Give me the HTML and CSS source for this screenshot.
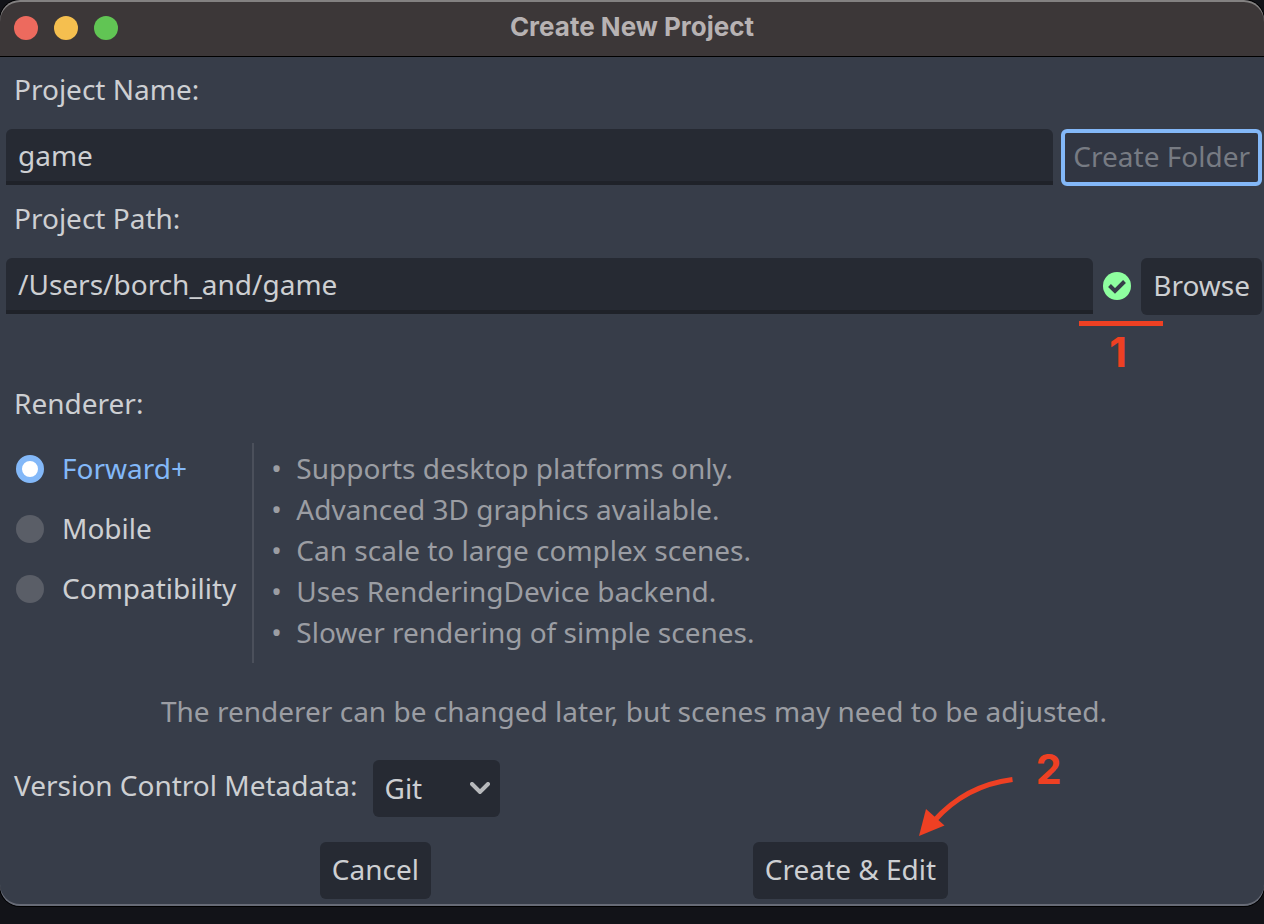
FILE: index.html
```
<!DOCTYPE html>
<html lang="en">
<head>
<meta charset="utf-8">
<title>Create New Project</title>
<link rel="stylesheet" href="styles.css">
</head>
<body>
<main class="window">
  <header class="titlebar">
    <div class="lights">
      <button type="button" class="light light-close" aria-label="Close"></button>
      <button type="button" class="light light-minimize" aria-label="Minimize"></button>
      <button type="button" class="light light-zoom" aria-label="Zoom"></button>
    </div>
    <h1 class="title">Create New Project</h1>
  </header>
  <form class="dialog">
    <label class="field-label" for="name">Project Name:</label>
    <div class="field-row">
      <input class="text-input" id="name" type="text" value="game">
      <button type="button" class="button button-disabled" disabled>Create Folder</button>
    </div>

    <label class="field-label" for="path">Project Path:</label>
    <div class="field-row">
      <input class="text-input" id="path" type="text" value="/Users/borch_and/game">
      <div class="status">
        <svg class="status-icon" viewBox="0 0 28 28" aria-hidden="true">
          <circle cx="14" cy="14" r="14" fill="#8eff9f"/>
          <path d="M6.500 13.500 L12 19 L21.500 9.500" fill="none" stroke="#363c48" stroke-width="4"/>
        </svg>
        <div class="mark mark-one">1</div>
      </div>
      <button type="button" class="button">Browse</button>
    </div>
    <div class="message"></div>

    <div class="field-label" id="renderer">Renderer:</div>
    <div class="renderer">
      <div class="options" role="radiogroup" aria-labelledby="renderer">
        <label class="option"><input class="radio" type="radio" name="renderer" checked><span class="option-text">Forward+</span></label>
        <label class="option"><input class="radio" type="radio" name="renderer"><span class="option-text">Mobile</span></label>
        <label class="option"><input class="radio" type="radio" name="renderer"><span class="option-text">Compatibility</span></label>
      </div>
      <ul class="features">
        <li class="feature">Supports desktop platforms only.</li>
        <li class="feature">Advanced 3D graphics available.</li>
        <li class="feature">Can scale to large complex scenes.</li>
        <li class="feature">Uses RenderingDevice backend.</li>
        <li class="feature">Slower rendering of simple scenes.</li>
      </ul>
    </div>
    <p class="note">The renderer can be changed later, but scenes may need to be adjusted.</p>

    <div class="vcs">
      <label class="vcs-label" for="vcs">Version Control Metadata:</label>
      <div class="select-wrap">
        <select class="select" id="vcs"><option>Git</option><option>None</option></select>
        <svg class="chevron" viewBox="0 0 20 12" aria-hidden="true"><path d="M2 2 L10 10 L18 2" fill="none" stroke="#b7b9bc" stroke-width="4" stroke-linecap="round"/></svg>
      </div>
    </div>

    <footer class="actions">
      <button type="button" class="button">Cancel</button>
      <div class="confirm">
        <button type="button" class="button">Create &amp; Edit</button>
        <svg class="arrow" viewBox="0 0 96 60" aria-hidden="true">
          <path d="M93.500 2.500 C66 6 38 18 15 44" fill="none" stroke="#ee4023" stroke-width="5"/>
          <path d="M0 59 L7 32 L25.500 48.500 Z" fill="#ee4023"/>
        </svg>
        <div class="mark mark-two">2</div>
      </div>
    </footer>
  </form>
</main>
</body>
</html>
```
FILE: styles.css
```
* { box-sizing: border-box; }

body {
  margin: 0;
  min-height: 100vh;
  background: #121318;
  color: #cdcfd2;
  font-family: "Noto Sans", sans-serif;
  font-size: 28px;
  line-height: 38px;
}

button, input, select { font: inherit; color: inherit; }

.window {
  position: relative;
  overflow: hidden;
  border-radius: 20px;
  background: #373d49;
  box-shadow: 0 0 0 1px #000;
}

/* Lit rim along the top and bottom edges. */
.window::after {
  content: "";
  position: absolute;
  inset: 0;
  border-radius: 20px;
  box-shadow: inset 0 2px #838181, inset 0 -2px #676b76;
  pointer-events: none;
}

.titlebar {
  display: grid;
  grid-template-columns: 1fr auto 1fr;
  align-items: center;
  height: 57px;
  padding: 0 14px;
  border-bottom: 1px solid #000;
  background: #3c3738;
}

.lights { display: flex; gap: 16px; }

.light {
  width: 24px;
  height: 24px;
  padding: 0;
  border: 0;
  border-radius: 50%;
}

.light-close { background: #ed6a5e; }
.light-minimize { background: #f5bf4f; }
.light-zoom { background: #61c554; }

.title {
  margin: 0;
  padding-bottom: 2px;
  color: #b7b2b3;
  font: 700 26px/52px Inter, sans-serif;
}

.dialog {
  display: flex;
  flex-direction: column;
  padding: 0 2px 7px 6px;
}

.field-label { padding: 13px 8px 21px; }

.field-row { display: flex; gap: 8px; }

.text-input {
  flex: 1;
  min-width: 0;
  height: 56px;
  padding: 0 12px;
  border: 0;
  border-bottom: 4px solid #1f2229;
  border-radius: 6px 6px 0 0;
  background: #262a33;
  outline: 0;
}

.button {
  display: block;
  height: 57px;
  padding: 0 12px 3px;
  border: 0;
  border-radius: 6px;
  background: #262a33;
  white-space: nowrap;
}

.button-disabled {
  padding: 0 8px 3px;
  border: 4px solid #83b8f8;
  background: #313642;
  color: #777b83;
}

.status {
  position: relative;
  display: flex;
  align-items: center;
  padding: 0 2px 2px;
}

.status-icon { width: 28px; height: 28px; }

.mark {
  position: absolute;
  color: #ee4023;
  font: 700 41px/52px Inter, sans-serif;
  text-align: center;
}

.mark-one {
  top: 63px;
  left: -22px;
  width: 84px;
  padding-right: 6px;
  border-top: 5px solid #ee4023;
}

.mark-two {
  bottom: 104px;
  left: 283px;
}

.message { height: 56px; }

.renderer {
  display: flex;
  min-height: 220px;
}

.options {
  display: flex;
  flex-direction: column;
  gap: 8px;
  padding: 0 16px 0 10px;
  border-right: 2px solid #4b505b;
}

.option {
  display: flex;
  align-items: center;
  gap: 18px;
  height: 52px;
}

.option-text { padding-bottom: 2px; }

.radio {
  appearance: none;
  width: 28px;
  height: 28px;
  margin: 0;
  border-radius: 50%;
  background: #5a5e67;
}

.radio:checked {
  border: 6px solid #83b8f8;
  background: #fff;
}

.radio:checked + .option-text { color: #83b8f8; }

.features {
  margin: 0;
  padding: 5px 0 10px 17px;
  color: #9b9da3;
  line-height: 41px;
  list-style: none;
}

.feature {
  display: flex;
  align-items: center;
  gap: 15px;
}

.feature::before {
  content: "•";
  width: 10px;
}

.note {
  margin: 0;
  padding: 29px 0 30px;
  color: #9b9da3;
  text-align: center;
}

.vcs {
  display: flex;
  align-items: flex-start;
  gap: 15px;
  padding-left: 8px;
}

.vcs-label { padding-top: 6px; }

.select-wrap { position: relative; }

.select {
  display: block;
  appearance: none;
  height: 57px;
  width: 127px;
  padding: 0 40px 2px 12px;
  border: 0;
  border-radius: 6px;
  background: #262a33;
}

.chevron {
  position: absolute;
  top: 22px;
  right: 10px;
  width: 20px;
  height: 12px;
  pointer-events: none;
}

.actions {
  display: flex;
  justify-content: space-evenly;
  column-gap: 8px;
  padding-top: 25px;
}

.confirm { position: relative; }

.arrow {
  position: absolute;
  bottom: 62px;
  left: 166px;
  width: 96px;
  height: 60px;
}
```
